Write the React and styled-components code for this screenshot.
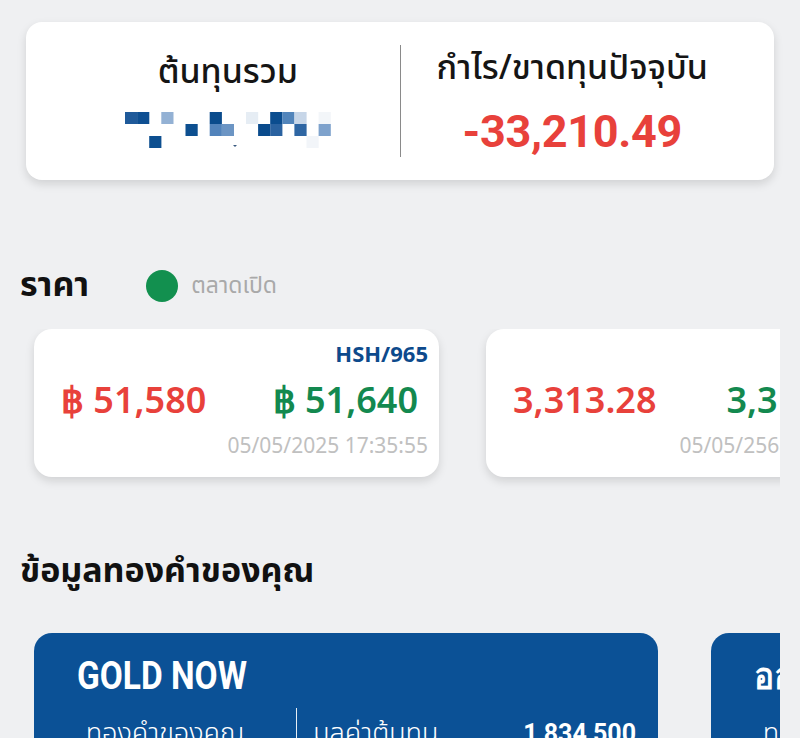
import React from 'react';
import styled, { createGlobalStyle } from 'styled-components';

const GlobalStyle = createGlobalStyle`
  html, body {
    margin: 0;
    padding: 0;
    background: #eff0f2;
  }
  body {
    font-family: "Noto Sans Thai", "Noto Sans", Roboto, sans-serif;
    color: #111;
  }
`;

const Page = styled.div`
  width: 800px;
  height: 738px;
  overflow: hidden;
  box-sizing: border-box;
  padding: 22px 20px 0 20px;
`;

const SummaryCard = styled.div`
  margin: 0 6px;
  height: 158px;
  box-sizing: border-box;
  padding: 0 30px;
  background: #fff;
  border-radius: 16px;
  box-shadow: 0 4px 10px rgba(0, 0, 0, 0.13);
  display: grid;
  grid-template-columns: 1fr 1px 1fr;
  align-items: center;
`;

const SummaryCol = styled.div`
  display: flex;
  flex-direction: column;
  align-items: center;
  gap: 16px;
`;

const SummaryTitle = styled.div`
  font-size: 34px;
  font-weight: 500;
  line-height: 46px;
  color: #151515;
  white-space: nowrap;
`;

const Divider = styled.div`
  width: 1px;
  height: ${p => p.$light ? 60 : 112}px;
  background: ${p => p.$light ? 'rgba(255,255,255,0.9)' : '#8a8a8a'};
`;

const LossValue = styled.div`
  font-family: Roboto, "Noto Sans", sans-serif;
  font-size: 45px;
  font-weight: 700;
  line-height: 48px;
  color: #e8413b;
  letter-spacing: -0.3px;
`;

const SectionHeader = styled.div`
  display: flex;
  align-items: center;
  margin-top: 86px;
  height: 40px;
`;

const SectionTitle = styled.div`
  font-size: ${p => p.$size || 34}px;
  font-weight: 700;
  color: #111;
  line-height: 40px;
  white-space: nowrap;
`;

const Status = styled.div`
  display: flex;
  align-items: center;
  gap: 13px;
  margin-left: 57px;
  font-size: 23px;
  color: #a9a9a9;
`;

const Dot = styled.span`
  width: 32px;
  height: 32px;
  border-radius: 50%;
  background: #12904f;
`;

const ScrollRow = styled.div`
  display: flex;
  gap: ${p => p.$gap}px;
  overflow: hidden;
  padding: 0 0 14px 14px;
  margin-top: ${p => p.$top}px;
`;

const PriceCard = styled.div`
  flex: 0 0 405px;
  height: 148px;
  box-sizing: border-box;
  background: #fff;
  border-radius: 18px;
  box-shadow: 0 4px 10px rgba(0, 0, 0, 0.13);
  padding: 10px 11px 0 27px;
  display: flex;
  flex-direction: column;
`;

const Code = styled.div`
  align-self: flex-end;
  height: 28px;
  font-family: "Noto Sans", Roboto, sans-serif;
  font-size: 22px;
  font-weight: 700;
  color: #0d4a8c;
  line-height: 28px;
`;

const Prices = styled.div`
  display: flex;
  justify-content: space-between;
  padding-right: 10px;
  margin-top: 9px;
`;

const Price = styled.div`
  font-family: "Noto Sans", Roboto, sans-serif;
  font-size: 36px;
  font-weight: 600;
  line-height: 48px;
  color: ${p => p.$up ? '#13894f' : '#e8413b'};
  white-space: nowrap;
`;

const Stamp = styled.div`
  align-self: flex-end;
  margin-top: 7px;
  font-family: "Noto Sans", Roboto, sans-serif;
  font-size: 21px;
  font-weight: 400;
  color: #c0c0c0;
  line-height: 28px;
  white-space: nowrap;
`;

const GoldSection = styled.div`
  margin-top: 61px;
`;

const GoldCard = styled.div`
  flex: 0 0 624px;
  height: 160px;
  box-sizing: border-box;
  background: #0b5196;
  border-radius: 18px 18px 0 0;
  padding: 22px 22px 0 0;
  color: #fff;
`;

const GoldTitle = styled.div`
  font-family: Roboto, "Noto Sans", sans-serif;
  font-size: 38px;
  font-weight: 700;
  line-height: 42px;
  margin-left: 43px;
  transform: scaleX(0.88);
  transform-origin: left center;
  white-space: nowrap;
`;

const GoldRow = styled.div`
  display: grid;
  grid-template-columns: 262px 1px 1fr;
  margin-top: 11px;
`;

const GoldCell = styled.div`
  display: flex;
  align-items: flex-start;
  justify-content: ${p => p.$split ? 'space-between' : 'center'};
  padding: 8px 0 0 ${p => p.$split ? 16 : 0}px;
  font-size: 27px;
  font-weight: 300;
  line-height: 36px;
  white-space: nowrap;
`;

const GoldValue = styled.span`
  font-family: Roboto, "Noto Sans", sans-serif;
  font-size: 25px;
  font-weight: 700;
`;

const mosaic = [
  [0, 0, '#1f5a9a'], [1, 0, '#0e4f92'], [3, 0, '#93b1d4'], [7, 0, '#0a4b8c'],
  [10, 0, '#e6edf4'], [12, 0, '#0b4d8f'], [13, 0, '#5285bb'], [14, 0, '#c7d6e8'], [16, 0, '#f3f6f9'],
  [5, 1, '#0d4f90'], [7, 1, '#5283bb'], [8, 1, '#6c95c4'], [11, 1, '#0a4b8c'], [12, 1, '#2a62a0'],
  [14, 1, '#2e66a3'], [16, 1, '#7ea2cc'],
  [2, 2, '#0d4f90'], [15, 2, '#f2f5f9'],
];

const Censored = () => (
  <svg width="206" height="40" viewBox="0 0 206 40">
    {mosaic.map(([c, r, fill], i) => (
      <rect key={i} x={c * 12.1} y={r * 12} width="12.2" height="12" fill={fill} />
    ))}
    <path d="M108 33 L112 33 L110 35 Z" fill="#3a5a80" />
  </svg>
);

export default function App() {
  return (
    <>
      <GlobalStyle />
      <Page>
        <SummaryCard>
          <SummaryCol>
            <SummaryTitle>ต้นทุนรวม</SummaryTitle>
            <Censored />
          </SummaryCol>
          <Divider />
          <SummaryCol>
            <SummaryTitle>กำไร/ขาดทุนปัจจุบัน</SummaryTitle>
            <LossValue>-33,210.49</LossValue>
          </SummaryCol>
        </SummaryCard>

        <SectionHeader>
          <SectionTitle>ราคา</SectionTitle>
          <Status>
            <Dot />
            ตลาดเปิด
          </Status>
        </SectionHeader>

        <ScrollRow $gap={47} $top={23}>
          <PriceCard>
            <Code>HSH/965</Code>
            <Prices>
              <Price>฿ 51,580</Price>
              <Price $up>฿ 51,640</Price>
            </Prices>
            <Stamp>05/05/2025 17:35:55</Stamp>
          </PriceCard>
          <PriceCard>
            <Code>&nbsp;</Code>
            <Prices>
              <Price>3,313.28</Price>
              <Price $up>3,318.28</Price>
            </Prices>
            <Stamp>05/05/2568 17:35:55</Stamp>
          </PriceCard>
        </ScrollRow>

        <GoldSection>
          <SectionTitle $size={34}>ข้อมูลทองคำของคุณ</SectionTitle>
        </GoldSection>

        <ScrollRow $gap={53} $top={41}>
          <GoldCard>
            <GoldTitle>GOLD NOW</GoldTitle>
            <GoldRow>
              <GoldCell>ทองคำของคุณ</GoldCell>
              <Divider $light />
              <GoldCell $split>
                มูลค่าต้นทุน
                <GoldValue>1,834,500</GoldValue>
              </GoldCell>
            </GoldRow>
          </GoldCard>
          <GoldCard>
            <GoldTitle>ออมทอง</GoldTitle>
            <GoldRow>
              <GoldCell>ทองคำของคุณ</GoldCell>
              <Divider $light />
              <GoldCell $split>
                มูลค่าต้นทุน
                <GoldValue>0</GoldValue>
              </GoldCell>
            </GoldRow>
          </GoldCard>
        </ScrollRow>
      </Page>
    </>
  );
}
